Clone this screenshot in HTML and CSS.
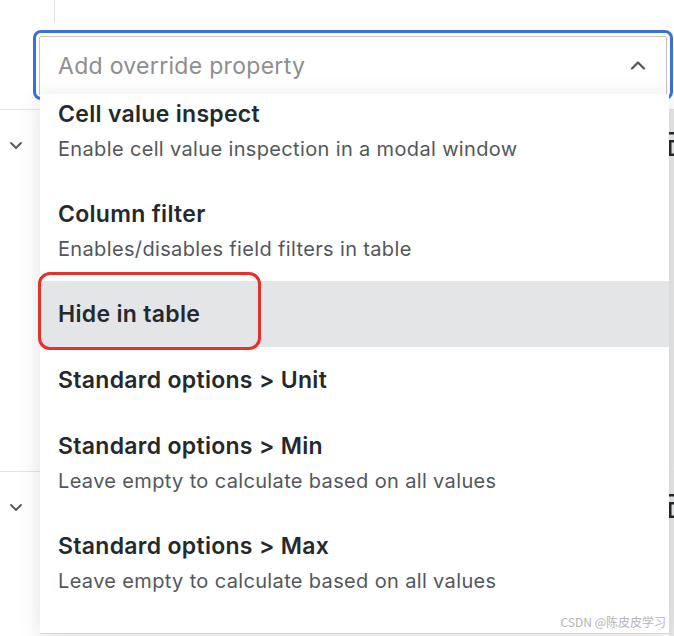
FILE: index.html
```html
<!DOCTYPE html>
<html>
<head>
<meta charset="utf-8">
<link rel="stylesheet" href="styles.css">
</head>
<body>
<div class="page">
  <div class="topline"></div>
  <div class="picker">
    <div class="picker-input">
      <span class="placeholder">Add override property</span>
      <svg class="chev-up" width="16" height="10" viewBox="0 0 16 10"><path d="M2 8.5 L8 2.5 L14 8.5" fill="none" stroke="#555" stroke-width="2.2" stroke-linecap="round" stroke-linejoin="round"/></svg>
    </div>
  </div>
  <div class="rows">
    <div class="row row-a">
      <svg class="chev-down" width="14" height="9" viewBox="0 0 14 9"><path d="M2 2 L7 7 L12 2" fill="none" stroke="#555" stroke-width="1.8" stroke-linecap="round" stroke-linejoin="round"/></svg>
      <div class="row-fill"></div>
      <svg class="row-icon" width="12" height="26" viewBox="0 0 12 26"><rect x="2" y="0" width="10" height="2.5" fill="#24292e"/><rect x="2" y="0" width="2.5" height="12" fill="#24292e"/><rect x="7" y="8" width="5" height="2.5" fill="#24292e"/><rect x="7" y="8" width="2.5" height="16" fill="#24292e"/><rect x="7" y="21.5" width="5" height="2.5" fill="#24292e"/></svg>
    </div>
    <div class="row row-b">
      <svg class="chev-down" width="14" height="9" viewBox="0 0 14 9"><path d="M2 2 L7 7 L12 2" fill="none" stroke="#555" stroke-width="1.8" stroke-linecap="round" stroke-linejoin="round"/></svg>
      <div class="row-fill"></div>
      <svg class="row-icon" width="12" height="26" viewBox="0 0 12 26"><rect x="2" y="0" width="10" height="2.5" fill="#24292e"/><rect x="2" y="0" width="2.5" height="12" fill="#24292e"/><rect x="7" y="8" width="5" height="2.5" fill="#24292e"/><rect x="7" y="8" width="2.5" height="16" fill="#24292e"/><rect x="7" y="21.5" width="5" height="2.5" fill="#24292e"/></svg>
    </div>
  </div>

  <div class="menu">
    <div class="menu-list">
      <div class="item">
        <div class="title">Cell value inspect</div>
        <div class="desc">Enable cell value inspection in a modal window</div>
      </div>
      <div class="item">
        <div class="title">Column filter</div>
        <div class="desc">Enables/disables field filters in table</div>
      </div>
      <div class="item active">
        <div class="title">Hide in table</div>
      </div>
      <div class="item">
        <div class="title">Standard options &gt; Unit</div>
      </div>
      <div class="item">
        <div class="title">Standard options &gt; Min</div>
        <div class="desc">Leave empty to calculate based on all values</div>
      </div>
      <div class="item">
        <div class="title">Standard options &gt; Max</div>
        <div class="desc">Leave empty to calculate based on all values</div>
      </div>
    </div>
  </div>

  <div class="mark"></div>
  <div class="watermark">CSDN @陈皮皮学习</div>
</div>
</body>
</html>
```

FILE: styles.css
```css
* { box-sizing: border-box; }
html, body { margin: 0; padding: 0; background: #fff; }
body { font-family: Inter, "Noto Sans", "Liberation Sans", sans-serif; }

.page {
  position: relative;
  width: 674px;
  height: 636px;
  overflow: hidden;
  background: #fff;
}

.topline {
  height: 22px;
  margin-left: 54px;
  border-left: 1px solid #e2e2e2;
}

.picker {
  margin-top: 8px;
  margin-left: 33px;
  width: 640px;
  height: 70px;
  border: 3px solid #3871dc;
  border-radius: 8px;
  padding: 3px;
}

.picker-input {
  height: 60px;
  border: 1px solid #c4c4c4;
  border-radius: 2px;
  display: flex;
  align-items: center;
  padding: 0 20px 0 18px;
  justify-content: space-between;
}

.placeholder {
  font-size: 23px;
  letter-spacing: 0.3px;
  color: #8e8e8e;
  margin-top: -1px;
}

.chev-up { margin-top: -2px; }

.rows {
  margin-top: 9px;
  background: linear-gradient(to right, #fff calc(100% - 5px), #e9e9e9 0);
}

.row {
  display: flex;
  align-items: flex-start;
  border-top: 1px solid #e4e4e4;
}

.row-a { height: 362px; padding-top: 31px; }
.row-b { height: 180px; padding-top: 31px; }

.chev-down { margin-left: 9px; flex: none; }

.row-fill { flex: 1; }

.row-icon { flex: none; margin-top: -9px; margin-right: 0; }

.menu {
  position: absolute;
  left: 40px;
  top: 94px;
  width: 629px;
  height: 540px;
  background: #fff;
  overflow: hidden;
  box-shadow: 0 4px 22px rgba(0, 0, 0, 0.12);
  border-bottom: 1px solid #d4d4d4;
}

.menu-list { margin-top: -13px; }

.item {
  padding: 19px 18px;
}

.item.active { background: #e4e5e6; }

.title {
  font-size: 23px;
  line-height: 28px;
  font-weight: 600;
  letter-spacing: 0.3px;
  color: #24292e;
}

.desc {
  margin-top: 8px;
  font-size: 20px;
  line-height: 26px;
  letter-spacing: 0.35px;
  color: #52575d;
}

.mark {
  position: absolute;
  left: 38px;
  top: 272px;
  width: 223px;
  height: 78px;
  border: 3px solid #e8302a;
  border-radius: 12px;
}

.watermark {
  position: absolute;
  right: 8px;
  bottom: 6px;
  font-family: "Noto Sans CJK SC", "Liberation Sans", sans-serif;
  font-size: 12px;
  color: #b4b4b4;
}
```
